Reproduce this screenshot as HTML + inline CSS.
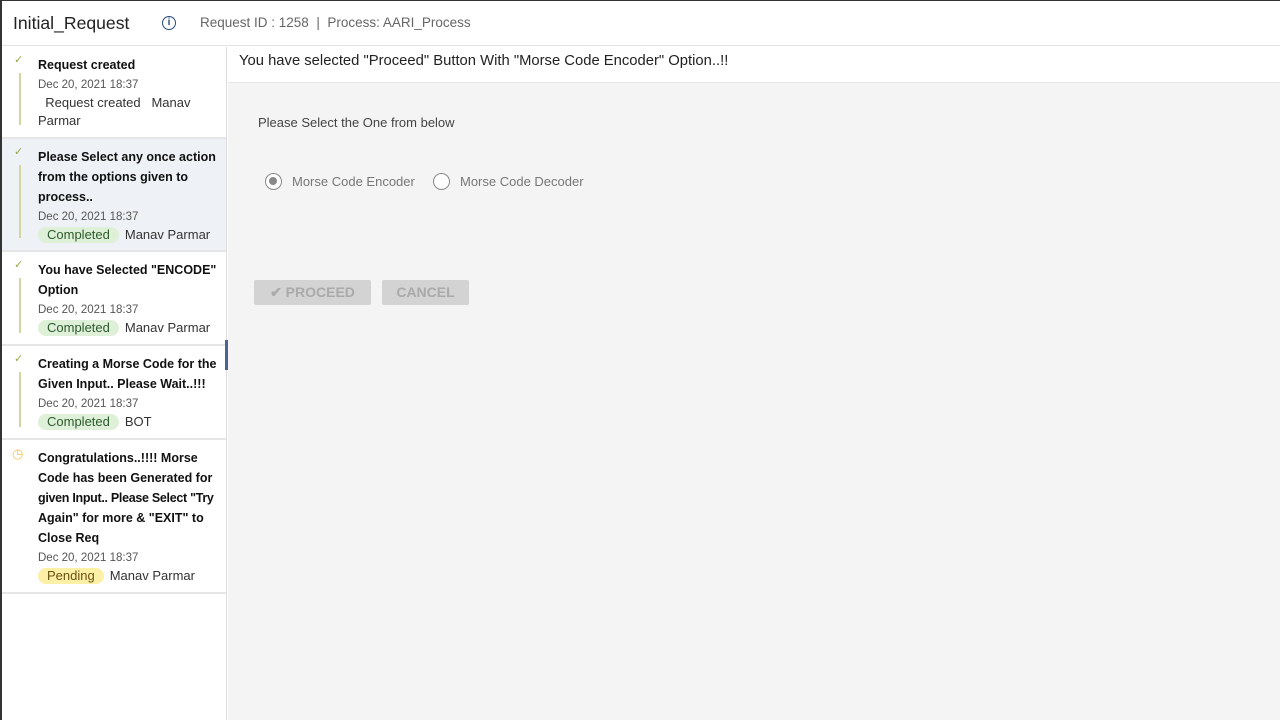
<!DOCTYPE html>
<html><head><style>
*{box-sizing:border-box;margin:0;padding:0}
body{width:1280px;height:720px;overflow:hidden;font-family:"Liberation Sans",sans-serif;background:#fff;position:relative;color:#222}
.frame{position:absolute;left:0;top:0;width:1280px;height:720px;border-left:2px solid #333;border-top:1px solid #333}
.hdr{position:absolute;left:2px;top:1px;right:0;height:45px;border-bottom:1px solid #e3e3e3;background:#fff}
.hdr .t{position:absolute;left:11px;top:12px;font-size:17.6px;color:#222}
.hdr .i{position:absolute;left:160px;top:15px;width:14px;height:14px;border:1.5px solid #2b4a7a;border-radius:50%;font-size:10px;font-weight:bold;color:#2b4a7a;text-align:center;line-height:11px}
.hdr .r{position:absolute;left:198px;top:14px;font-size:13.5px;color:#666}
.side{position:absolute;left:2px;top:47px;width:225px;height:673px;border-right:1px solid #ddd;background:#fff}
.it{position:relative;border-bottom:2px solid #e6e6e6;padding:8px 0 0 36px}
.it .ck{position:absolute;left:12px;top:6px;color:#9aa84a;font-size:11px}
.it .ln{position:absolute;left:17px;width:2px;background:#d4d6a0}
.it .h{font-weight:bold;font-size:12.5px;line-height:20px;color:#111}
.it .d{font-size:11.5px;color:#555;line-height:18px;margin-top:1px}
.it .m{font-size:13px;line-height:18px;color:#333}
.b{display:inline-block;padding:0 9px;border-radius:9px;font-size:13px;line-height:16px;margin-right:6px}
.g{background:#dff0d8;color:#2d5a2d}
.y{background:#fcefa6;color:#6a5210}
.main{position:absolute;left:228px;top:47px;right:0;bottom:0;background:#f4f4f4}
.msg{height:36px;background:#fff;border-bottom:1px solid #e6e6e6;font-size:14.8px;padding:6px 11px;color:#222}
.lbl{position:absolute;left:30px;top:68px;font-size:13px;color:#444}
.rad{position:absolute;top:126px;font-size:13px;color:#777;display:flex;align-items:center}
.rad span{display:inline-block;width:17px;height:17px;border:1.5px solid #888;border-radius:50%;margin-right:10px;background:#fff;position:relative}
.rad span.on::after{content:"";position:absolute;left:3px;top:3px;width:8px;height:8px;border-radius:50%;background:#888}
.btn{position:absolute;top:233px;height:25px;background:#d3d3d3;color:#aaa;font-weight:bold;font-size:14px;border-radius:2px;text-align:center;line-height:25px}
</style></head><body>
<div class="frame"></div>
<div class="hdr"><div class="t">Initial_Request</div><div class="i">i</div><div class="r">Request ID : 1258 &nbsp;|&nbsp; Process: AARI_Process</div></div>
<div class="side">
 <div class="it" style="height:92px"><div class="ck">✓</div><div class="ln" style="top:26px;height:52px"></div>
  <div class="h">Request created</div><div class="d">Dec 20, 2021 18:37</div><div class="m">&nbsp;&nbsp;Request created &nbsp;&nbsp;Manav Parmar</div></div>
 <div class="it" style="height:113px;background:#eef1f6"><div class="ck">✓</div><div class="ln" style="top:26px;height:73px"></div>
  <div class="h">Please Select any once action from the options given to process..</div><div class="d">Dec 20, 2021 18:37</div><div class="m"><span class="b g">Completed</span>Manav Parmar</div></div>
 <div class="it" style="height:94px"><div class="ck">✓</div><div class="ln" style="top:26px;height:55px"></div>
  <div class="h">You have Selected "ENCODE" Option</div><div class="d">Dec 20, 2021 18:37</div><div class="m"><span class="b g">Completed</span>Manav Parmar</div></div>
 <div class="it" style="height:94px"><div class="ck">✓</div><div class="ln" style="top:26px;height:55px"></div>
  <div class="h">Creating a Morse Code for the Given Input.. Please Wait..!!!</div><div class="d">Dec 20, 2021 18:37</div><div class="m"><span class="b g">Completed</span>BOT</div></div>
 <div class="it" style="height:154px"><div class="ck" style="color:#f2c14e;font-size:13px;left:10px">◷</div>
  <div class="h" style="white-space:nowrap">Congratulations..!!!! Morse<br>Code has been Generated for<br><span style="letter-spacing:-0.3px">given Input.. Please Select "Try</span><br>Again" for more &amp; "EXIT" to<br>Close Req</div><div class="d">Dec 20, 2021 18:37</div><div class="m"><span class="b y">Pending</span>Manav Parmar</div></div>
 <div style="position:absolute;left:223px;top:293px;width:3px;height:30px;background:#4a6590"></div>
</div>
<div class="main">
 <div class="msg">You have selected "Proceed" Button With "Morse Code Encoder" Option..!!</div>
 <div class="lbl">Please Select the One from below</div>
 <div class="rad" style="left:37px"><span class="on"></span>Morse Code Encoder</div>
 <div class="rad" style="left:205px"><span></span>Morse Code Decoder</div>
 <div class="btn" style="left:26px;width:117px">✔ PROCEED</div>
 <div class="btn" style="left:154px;width:87px">CANCEL</div>
</div>
</body></html>
